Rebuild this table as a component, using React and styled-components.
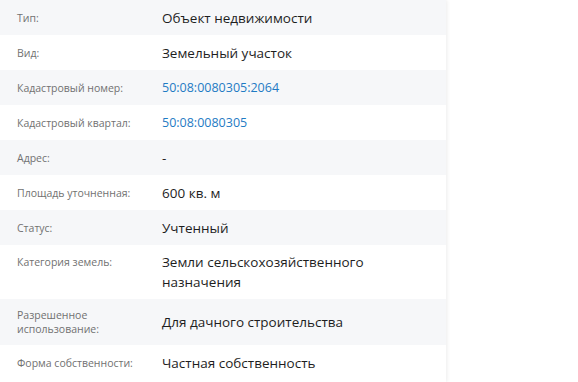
import React from "react";
import styled, { createGlobalStyle } from "styled-components";

const Global = createGlobalStyle`
  html, body { margin: 0; padding: 0; background: #ffffff; }
  body { font-family: "Open Sans", "Noto Sans", sans-serif; }
`;

const Panel = styled.div`
  width: 446px;
  min-height: 382px;
  background: #ffffff;
  box-shadow: 1px 0 4px rgba(0, 0, 0, 0.08);
  display: flex;
  flex-direction: column;
`;

const Row = styled.div`
  display: grid;
  grid-template-columns: 145px 1fr;
  align-items: ${(p) => (p.$align === "start" ? "start" : "center")};
  padding: ${(p) => p.$pad || "7px"} 17px;
  min-height: 21px;
  background: ${(p) => (p.$shaded ? "#f6f7f9" : "#ffffff")};
`;

const Label = styled.div`
  font-size: 10.5px;
  line-height: 14px;
  color: #717171;
  padding-top: ${(p) => (p.$top ? "3px" : "0")};
`;

const Value = styled.div`
  font-size: 13.5px;
  line-height: 20px;
  color: #1e1e1e;
  padding-right: 40px;
`;

const Link = styled.a`
  font-size: 12.5px;
  color: #1f7bc4;
  text-decoration: none;
`;

const rows = [
  { label: "Тип:", value: "Объект недвижимости" },
  { label: "Вид:", value: "Земельный участок" },
  { label: "Кадастровый номер:", link: "50:08:0080305:2064" },
  { label: "Кадастровый квартал:", link: "50:08:0080305" },
  { label: "Адрес:", value: "-" },
  { label: "Площадь уточненная:", value: "600 кв. м" },
  { label: "Статус:", value: "Учтенный" },
  { label: "Категория земель:", value: "Земли сельскохозяйственного назначения", align: "start" },
  { label: "Разрешенное использование:", value: "Для дачного строительства", pad: "9px", twoLine: true },
  { label: "Форма собственности:", value: "Частная собственность" },
];

export default function App() {
  return (
    <>
      <Global />
      <Panel>
        {rows.map((r, i) => (
          <Row key={i} $shaded={i % 2 === 0} $align={r.align} $pad={r.pad}>
            <Label $top={r.align === "start"}>
              {r.twoLine ? (
                <>
                  Разрешенное
                  <br />
                  использование:
                </>
              ) : (
                r.label
              )}
            </Label>
            <Value>{r.link ? <Link href="#">{r.link}</Link> : r.value}</Value>
          </Row>
        ))}
      </Panel>
    </>
  );
}
